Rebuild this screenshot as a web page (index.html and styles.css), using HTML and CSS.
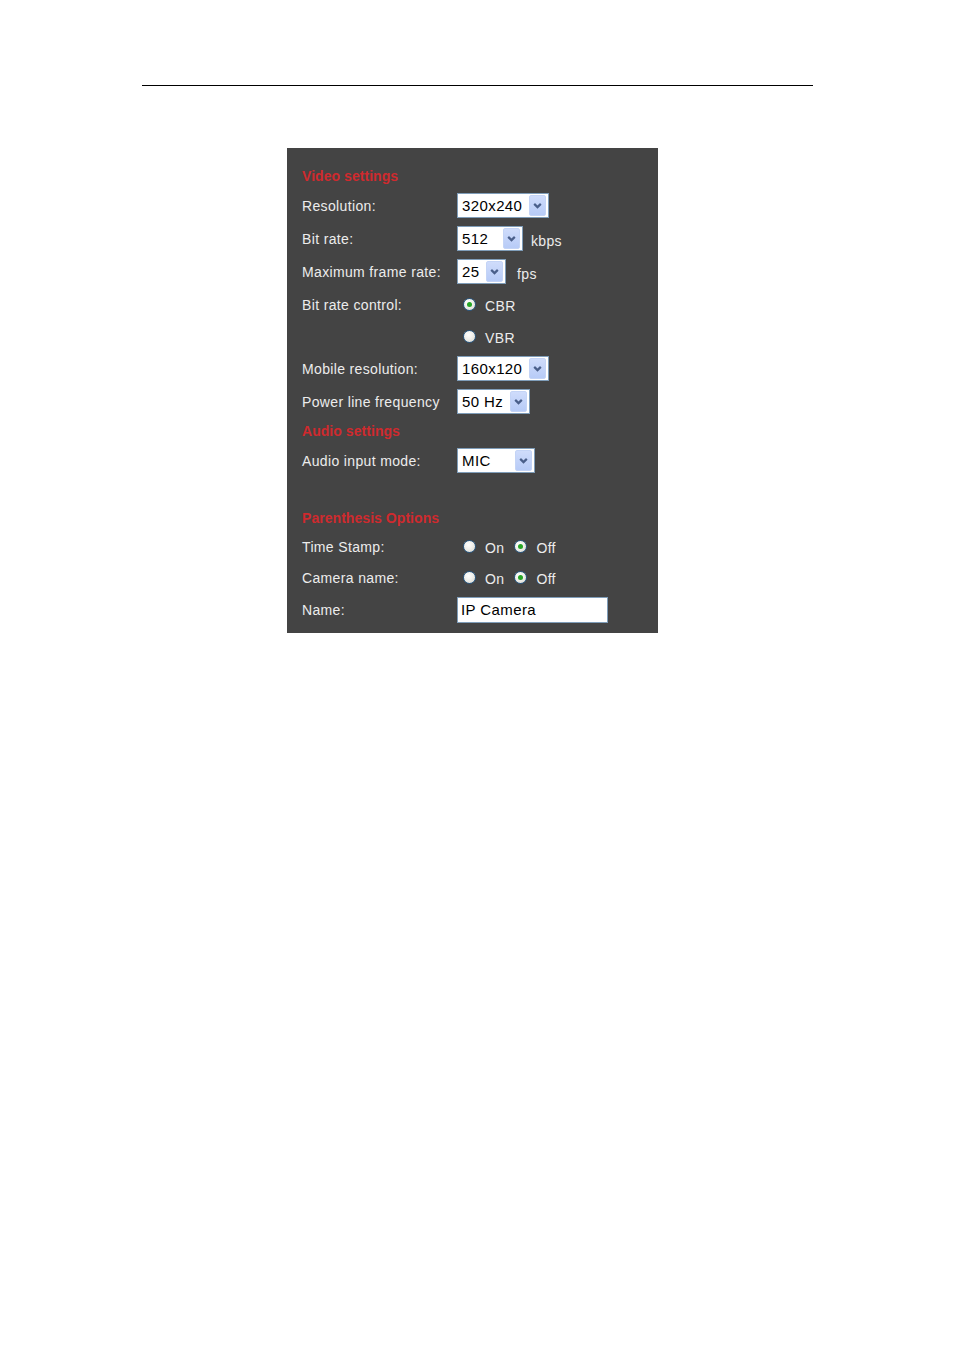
FILE: index.html
```html
<!DOCTYPE html>
<html>
<head>
<meta charset="utf-8">
<link rel="stylesheet" href="styles.css">
</head>
<body>
<div class="page">
  <hr class="rule">
  <div class="panel">
    <div class="row head">Video settings</div>
    <div class="row">
      <div class="label">Resolution:</div>
      <div class="ctrl"><div class="select w92"><span class="val">320x240</span><span class="btn"><svg viewBox="0 0 10 10" width="11" height="11"><path d="M2 3.5 L5 6.5 L8 3.5" fill="none" stroke="#4a5f8a" stroke-width="2"/></svg></span></div></div>
    </div>
    <div class="row">
      <div class="label">Bit rate:</div>
      <div class="ctrl"><div class="select w66"><span class="val">512</span><span class="btn"><svg viewBox="0 0 10 10" width="11" height="11"><path d="M2 3.5 L5 6.5 L8 3.5" fill="none" stroke="#4a5f8a" stroke-width="2"/></svg></span></div><span class="unit">kbps</span></div>
    </div>
    <div class="row">
      <div class="label">Maximum frame rate:</div>
      <div class="ctrl"><div class="select w49"><span class="val">25</span><span class="btn"><svg viewBox="0 0 10 10" width="11" height="11"><path d="M2 3.5 L5 6.5 L8 3.5" fill="none" stroke="#4a5f8a" stroke-width="2"/></svg></span></div><span class="unit u2">fps</span></div>
    </div>
    <div class="row">
      <div class="label">Bit rate control:</div>
      <div class="ctrl"><span class="radio on"></span><span class="opt">CBR</span></div>
    </div>
    <div class="row r31">
      <div class="label"></div>
      <div class="ctrl"><span class="radio"></span><span class="opt">VBR</span></div>
    </div>
    <div class="row">
      <div class="label">Mobile resolution:</div>
      <div class="ctrl"><div class="select w92"><span class="val">160x120</span><span class="btn"><svg viewBox="0 0 10 10" width="11" height="11"><path d="M2 3.5 L5 6.5 L8 3.5" fill="none" stroke="#4a5f8a" stroke-width="2"/></svg></span></div></div>
    </div>
    <div class="row">
      <div class="label">Power line frequency</div>
      <div class="ctrl"><div class="select w73"><span class="val">50 Hz</span><span class="btn"><svg viewBox="0 0 10 10" width="11" height="11"><path d="M2 3.5 L5 6.5 L8 3.5" fill="none" stroke="#4a5f8a" stroke-width="2"/></svg></span></div></div>
    </div>
    <div class="row head">Audio settings</div>
    <div class="row">
      <div class="label">Audio input mode:</div>
      <div class="ctrl"><div class="select w78"><span class="val">MIC</span><span class="btn"><svg viewBox="0 0 10 10" width="11" height="11"><path d="M2 3.5 L5 6.5 L8 3.5" fill="none" stroke="#4a5f8a" stroke-width="2"/></svg></span></div></div>
    </div>
    <div class="spacer"></div>
    <div class="row head">Parenthesis Options</div>
    <div class="row r31">
      <div class="label">Time Stamp:</div>
      <div class="ctrl"><span class="radio"></span><span class="opt">On</span><span class="radio on"></span><span class="opt">Off</span></div>
    </div>
    <div class="row r31">
      <div class="label">Camera name:</div>
      <div class="ctrl"><span class="radio"></span><span class="opt">On</span><span class="radio on"></span><span class="opt">Off</span></div>
    </div>
    <div class="row">
      <div class="label">Name:</div>
      <div class="ctrl"><div class="text">IP Camera</div></div>
    </div>
  </div>
</div>
</body>
</html>
```
FILE: styles.css
```css
html, body {
  margin: 0;
  padding: 0;
  background: #ffffff;
}
.page {
  width: 955px;
  height: 1350px;
  padding-top: 85px;
  box-sizing: border-box;
  font-family: "Liberation Sans", Arial, sans-serif;
}
.rule {
  margin: 0 0 0 142px;
  width: 671px;
  height: 0;
  border: 0;
  border-top: 1px solid #000000;
}
.panel {
  margin: 62px 0 0 287px;
  width: 371px;
  height: 485px;
  box-sizing: border-box;
  background: #444444;
  padding: 15px 0 0 15px;
}
.row {
  display: flex;
  align-items: center;
  height: 33px;
}
.row.r31 {
  height: 31px;
}
.row.head {
  height: 26px;
  color: #cf2a2e;
  font-weight: bold;
  font-size: 14px;
  letter-spacing: 0.05px;
}
.label {
  width: 155px;
  flex: none;
  color: #ececec;
  font-size: 14px;
  letter-spacing: 0.35px;
}
.ctrl {
  display: flex;
  align-items: center;
}
.select {
  height: 25px;
  box-sizing: border-box;
  border: 1px solid #7f9db9;
  background: #ffffff;
  display: flex;
  align-items: center;
  justify-content: space-between;
  padding: 1px 2px 1px 4px;
}
.w92 { width: 92px; }
.w66 { width: 66px; }
.w49 { width: 49px; }
.w73 { width: 73px; }
.w78 { width: 78px; }
.val {
  color: #000000;
  font-size: 15px;
  letter-spacing: 0.4px;
}
.btn {
  width: 17px;
  height: 21px;
  box-sizing: border-box;
  border: 1px solid #c4d4f6;
  border-radius: 2px;
  background: linear-gradient(#cfdcfb, #b7cbf7);
  display: flex;
  align-items: center;
  justify-content: center;
}
.btn svg {
  display: block;
}
.unit {
  color: #ececec;
  font-size: 14px;
  letter-spacing: 0.35px;
  margin-left: 8px;
  padding-top: 5px;
}
.unit.u2 {
  margin-left: 11px;
}
.radio {
  width: 13px;
  height: 13px;
  box-sizing: border-box;
  border-radius: 50%;
  border: 1px solid #2c5b86;
  background: radial-gradient(circle at 40% 35%, #ffffff 0%, #f0f0ec 45%, #d4d4cc 100%);
  margin-left: 6px;
  display: flex;
  align-items: center;
  justify-content: center;
  flex: none;
}
.radio.on::after {
  content: "";
  width: 5px;
  height: 5px;
  border-radius: 50%;
  background: #26a526;
}
.opt {
  color: #ececec;
  font-size: 14px;
  letter-spacing: 0.35px;
  margin-left: 9px;
  padding-top: 2px;
}
.opt + .radio {
  margin-left: 10px;
}
.spacer {
  height: 28px;
}
.text {
  width: 151px;
  height: 26px;
  box-sizing: border-box;
  border: 1px solid #7f9db9;
  background: #ffffff;
  color: #000000;
  font-size: 15px;
  letter-spacing: 0.4px;
  padding: 3px 0 0 3px;
}
```
